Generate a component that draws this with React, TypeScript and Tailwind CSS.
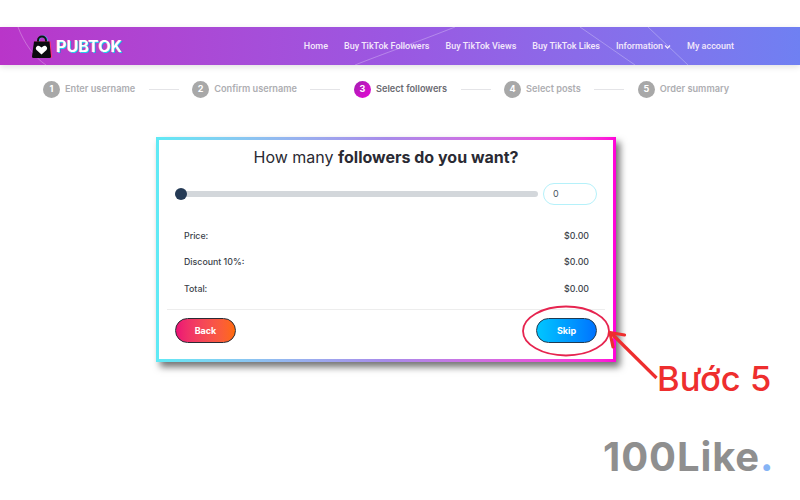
const nav = ["Buy TikTok Followers", "Buy TikTok Views", "Buy TikTok Likes"];

const steps = [
  { n: 1, label: "Enter username" },
  { n: 2, label: "Confirm username" },
  { n: 3, label: "Select followers", active: true },
  { n: 4, label: "Select posts" },
  { n: 5, label: "Order summary" },
];

const rows = [
  { label: "Price:", value: "$0.00" },
  { label: "Discount 10%:", value: "$0.00" },
  { label: "Total:", value: "$0.00" },
];

function Logo() {
  return (
    <svg width="22" height="23" viewBox="0 0 22 23" className="shrink-0">
      <path d="M7 8V5.5a4 4 0 0 1 8 0V8" fill="none" stroke="#22d3ee" strokeWidth="2" transform="translate(0.7 0)" />
      <path d="M7 8V5.5a4 4 0 0 1 8 0V8" fill="none" stroke="#111" strokeWidth="2" />
      <path d="M3.5 6.5h16l1.5 15a1.5 1.5 0 0 1-1.5 1.5H3a1.5 1.5 0 0 1-1.5-1.5z" fill="#ff2d6f" />
      <path d="M3 6.5h15.5l1.5 15a1.5 1.5 0 0 1-1.5 1.5H2.500a1.500 1.500 0 0 1-1.500-1.500z" fill="#0b0b0f" />
      <path d="M10.500 19.500l-5-4.600c-2-2.200 1-5.600 3.300-3.700l1.700 1.400 1.700-1.400c2.300-1.900 5.300 1.500 3.300 3.700z" fill="#fff" />
    </svg>
  );
}

function Step({ n, label, active }: { n: number; label: string; active?: boolean }) {
  return (
    <div className="flex items-center gap-[5px]">
      <span
        className={`flex h-[17px] w-[17px] items-center justify-center rounded-full text-[9px] font-bold text-white ${
          active ? "bg-gradient-to-br from-[#a21caf] to-[#e800d8]" : "bg-[#a8a8a8]"
        }`}
      >
        {n}
      </span>
      <span className={`whitespace-nowrap text-[9.2px] font-semibold ${active ? "text-[#6b6b72]" : "text-[#aeaeb2]"}`}>
        {label}
      </span>
    </div>
  );
}

export default function App() {
  return (
    <div className="relative h-[500px] w-[800px] overflow-hidden bg-white font-['Inter',sans-serif]">
      <div className="h-[27px]" />

      <header className="relative flex h-[38px] items-center justify-between overflow-hidden bg-gradient-to-r from-[#b935c9] via-[#9a58e2] to-[#6f80f2] pl-[31px] pr-[66px] shadow-[0_2px_6px_rgba(0,0,0,0.12)]">
        <svg className="absolute inset-0" width="800" height="38" fill="none" stroke="#ffffff" strokeOpacity="0.28">
          <path d="M18 0C24 16 34 30 46 38" />
          <path d="M355 38C380 28 420 14 455 0" />
          <path d="M580 0L635 38" />
          <path d="M648 0L688 38" />
        </svg>
        <div className="relative flex items-center gap-[3px]">
          <Logo />
          <span className="text-[16px] font-semibold leading-none tracking-[0.1px] text-white [text-shadow:1px_1px_0_#22d3ee,-1px_0_0_#ff5fa2]">
            PUBTOK
          </span>
        </div>
        <nav className="relative mt-[2px] flex items-center gap-[16px] font-['Roboto',sans-serif] text-[9px] font-medium text-[#f4e9fb]">
          <a>Home</a>
          {nav.map((item) => (
            <a key={item} className="whitespace-nowrap">
              {item}
            </a>
          ))}
          <a className="flex items-center gap-[1px]">
            Information
            <svg width="7" height="7" viewBox="0 0 7 7" fill="none" stroke="currentColor" strokeWidth="1.300">
              <path d="M1 1.500l2.500 2.500L6 1.500" />
            </svg>
          </a>
          <a className="whitespace-nowrap">My account</a>
        </nav>
      </header>

      <div className="flex h-[48px] items-center pl-[43px]">
        {steps.map((s, i) => (
          <div key={s.n} className="flex items-center">
            <Step n={s.n} label={s.label} active={s.active} />
            {i < steps.length - 1 && <span className="mx-[13.5px] h-px w-[30px] bg-[#e4e4e7]" />}
          </div>
        ))}
      </div>

      <main className="mt-[24px] flex justify-start pl-[156px]">
        <div className="h-[225px] w-[460px] bg-gradient-to-r from-[#5eeaf5] via-[#a78bea] to-[#ff00d8] p-[3px] shadow-[4px_5px_7px_rgba(0,0,0,0.55)]">
          <div className="flex h-full flex-col bg-white">
            <h1 className="mt-[6px] text-center text-[16px] leading-[22px] text-[#2a2a33]">
              How many <span className="font-bold">followers do you want?</span>
            </h1>

            <div className="mt-[15px] flex items-center pl-[16px] pr-[16px]">
              <div className="relative h-[6px] flex-1 rounded-full bg-[#d3d7db]">
                <span className="absolute left-0 top-1/2 h-[12px] w-[12px] -translate-y-1/2 rounded-full bg-[#253a55]" />
              </div>
              <div className="ml-[5px] flex h-[22px] w-[54px] items-center rounded-full border border-[#b5f1fa] pl-[9px] text-[9px] text-[#4b5563]">
                0
              </div>
            </div>

            <dl className="mt-[25px] flex flex-col gap-[15.500px] pl-[25px] pr-[24px] text-[8.800px] font-medium text-[#3b3f4a]">
              {rows.map((r) => (
                <div key={r.label} className="flex h-[11px] items-center justify-between">
                  <dt>{r.label}</dt>
                  <dd>{r.value}</dd>
                </div>
              ))}
            </dl>

            <div className="mx-[8px] mt-[15px] h-px bg-[#ededed]" />

            <div className="mt-[8px] flex justify-between px-[16px]">
              <button className="h-[25px] w-[61px] rounded-full border-[1.500px] border-[#2a2a33] bg-gradient-to-r from-[#ec0f75] to-[#ff6a00] text-[9px] font-bold text-white">
                Back
              </button>
              <button className="h-[25px] w-[61px] rounded-full border-[1.500px] border-[#1f3a52] bg-gradient-to-r from-[#00c6ff] to-[#0072ff] text-[9px] font-bold text-white">
                Skip
              </button>
            </div>
          </div>
        </div>
      </main>

      {/* annotation drawn on top of the screenshot */}
      <svg className="absolute left-0 top-0" width="800" height="500" fill="none">
        <ellipse cx="566" cy="331" rx="43" ry="24.500" stroke="#e6244f" strokeWidth="1.800" />
        <path d="M656.500 378L612 334" stroke="#ee2e2e" strokeWidth="3.200" />
        <path d="M610 332.500l14.500 2.500M610 332.500l3 14.500" stroke="#ee2e2e" strokeWidth="3.200" strokeLinecap="round" />
      </svg>
      <span className="absolute left-[657px] top-[359px] text-[34.5px] font-medium leading-[40px] text-[#ee2e2e]">
        Bước 5
      </span>
      <span className="absolute left-[603px] top-[433px] text-[40px] font-bold leading-[48px] tracking-[0.9px] text-[#8f8f8f]">
        100Like<span className="text-[#86b4f5]">.</span>
      </span>
    </div>
  );
}
